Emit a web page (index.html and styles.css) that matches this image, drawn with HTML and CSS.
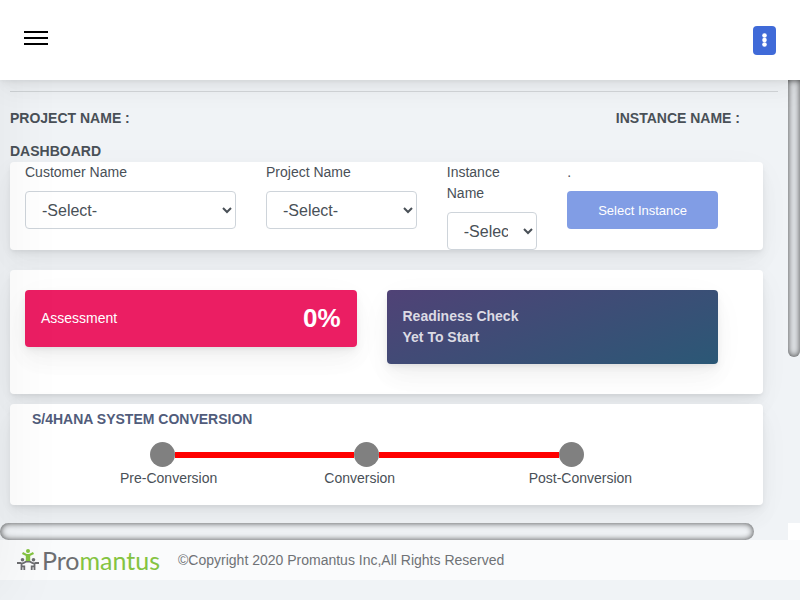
FILE: index.html
```html
<!DOCTYPE html>
<html lang="en">
<head>
<meta charset="utf-8">
<meta name="viewport" content="width=device-width, initial-scale=1">
<title>Promantus Dashboard</title>
<link rel="stylesheet" href="styles.css">
</head>
<body>
<header class="header">
  <button class="burger" type="button" aria-label="Open navigation"><span></span><span></span><span></span></button>
  <button class="more" type="button" aria-label="More options">
    <svg width="5" height="14" viewBox="0 0 5 14" fill="#fff"><circle cx="2.5" cy="2.5" r="2.3"/><circle cx="2.5" cy="7" r="2.3"/><circle cx="2.5" cy="11.5" r="2.3"/></svg>
  </button>
</header>
<div class="viewport">
  <main class="content">
    <hr class="rule">
    <div class="names">
      <h2 class="heading">PROJECT NAME :</h2>
      <h2 class="heading">INSTANCE NAME :</h2>
    </div>
    <h1 class="heading">DASHBOARD</h1>
    <form class="card filters">
      <div class="field">
        <label for="customer">Customer Name</label>
        <select id="customer"><option>-Select-</option></select>
      </div>
      <div class="field">
        <label for="project">Project Name</label>
        <select id="project"><option>-Select-</option></select>
      </div>
      <div class="field">
        <label for="instance">Instance Name</label>
        <select id="instance"><option>-Select-</option></select>
      </div>
      <div class="field">
        <span class="dot">.</span>
        <button class="submit" type="button" disabled>Select Instance</button>
      </div>
    </form>
    <section class="card tiles">
      <div class="tile assessment"><span>Assessment</span><strong class="percent">0%</strong></div>
      <div class="tile readiness">Readiness Check<br>Yet To Start</div>
    </section>
    <section class="card conversion">
      <h2 class="heading conversion-title">S/4HANA SYSTEM CONVERSION</h2>
      <ol class="steps">
        <li class="step">Pre-Conversion</li>
        <li class="step">Conversion</li>
        <li class="step">Post-Conversion</li>
      </ol>
    </section>
  </main>
  <div class="track-y"><div class="thumb thumb-y"></div></div>
  <div class="track-x"><div class="thumb thumb-x"></div></div>
  <div class="corner"></div>
</div>
<footer class="footer">
  <div class="logo">
    <svg width="22" height="22" viewBox="0 0 22 22" fill="none">
      <g stroke="#6d6e71" stroke-width="1.8"><circle cx="5.5" cy="10.8" r="1.8" fill="#6d6e71" stroke="none"/><circle cx="16.5" cy="10.8" r="1.8" fill="#6d6e71" stroke="none"/><path d="M0 14H3.500Q5.500 15 7.500 13.500L9 12.700H13L14.500 13.500Q16.500 15 18.500 14H22M4.500 14V21M17.500 14V21M4 17.300H7.300V21M18 17.300H14.700V21"/></g>
      <g stroke="#84c341" stroke-width="2.2"><circle cx="11" cy="2" r="2" fill="#84c341" stroke="none"/><path d="M5.500 4L9.300 6H12.700L16.500 4M9.900 5.500V12M12.100 5.500V12"/></g>
    </svg>
    <span class="brand">Pro<span>mantus</span></span>
  </div>
  <p class="copyright">©Copyright 2020 Promantus Inc,All Rights Reserved</p>
</footer>
</body>
</html>
```
FILE: styles.css
```css
*, *::before, *::after { box-sizing: border-box; }
:root {
  --shadow: 0 8px 35px rgba(4, 9, 20, .03), 0 15px 22px rgba(4, 9, 20, .03), 0 4px 9px rgba(4, 9, 20, .05), 0 2px 3px rgba(4, 9, 20, .03);
}
body {
  margin: 0;
  background: #f0f3f6;
  color: #495057;
  font: 14px/21px "Liberation Sans", Arial, sans-serif;
  overflow: hidden;
  min-height: 100vh;
}
/* soft edge of the collapsed side drawer */
body::before {
  content: "";
  position: fixed;
  z-index: 2;
  top: 0;
  bottom: 0;
  left: -280px;
  width: 280px;
  box-shadow: 7px 0 60px rgba(0, 0, 0, .05);
  pointer-events: none;
}
button, select { font-family: inherit; }
.header {
  position: relative;
  z-index: 3;
  display: flex;
  align-items: center;
  justify-content: space-between;
  height: 80px;
  padding: 0 24px;
  background: #fff;
  box-shadow: var(--shadow);
}
.burger {
  display: grid;
  gap: 4px;
  width: 24px;
  margin: 0 0 4px;
  padding: 0;
  border: 0;
  background: none;
}
.burger span { height: 2px; background: #000; }
.more {
  display: flex;
  align-items: center;
  justify-content: center;
  width: 23px;
  height: 29px;
  padding: 0;
  border: 0;
  border-radius: 4px;
  background: #3f6ad8;
}
.viewport {
  display: grid;
  grid-template-columns: 1fr 12px;
  grid-template-rows: auto 17px;
}
.content { padding: 11px 10px 18px; }
.rule { margin: 0 0 16px; border: 0; border-top: 1px solid #d2d6d9; }
.heading { margin: 0; font-size: 14px; line-height: 21px; font-weight: 700; }
.names {
  display: flex;
  justify-content: space-between;
  margin-bottom: 12px;
  padding-right: 38px;
}
.card {
  margin-right: 15px;
  padding-right: 30px;
  border-radius: 4px;
  background: #fff;
  box-shadow: var(--shadow);
}
.filters { display: grid; grid-template-columns: 4fr 3fr 2fr 3fr; margin-bottom: 20px; }
.field { min-width: 0; padding: 0 15px; }
.field label, .dot { display: block; margin-bottom: 8px; }
.field select {
  display: block;
  width: 100%;
  height: 38px;
  padding: 6px 12px;
  border: 1px solid #ced4da;
  border-radius: 4px;
  background: #fff;
  color: #495057;
  font-size: 16px;
}
.submit {
  display: block;
  width: 100%;
  height: 38px;
  border: 0;
  border-radius: 4px;
  background: #3f6ad8;
  color: #fff;
  font-size: 13px;
  opacity: .65;
}
.tiles {
  display: grid;
  grid-template-columns: 1fr 1fr;
  align-items: start;
  gap: 30px;
  margin-bottom: 10px;
  padding: 20px 45px 30px 15px;
}
.tile { border-radius: 4px; box-shadow: var(--shadow); }
.assessment {
  display: flex;
  align-items: center;
  justify-content: space-between;
  height: 57px;
  padding: 0 16px;
  background: #eb1e63;
  color: #fff;
}
.percent { font-size: 26px; line-height: 27px; }
.readiness {
  padding: 16px;
  background: linear-gradient(160deg, #504276, #2b5876);
  color: #dcdbe4;
  font-weight: 700;
}
.conversion { padding: 5px 30px 16px 22px; }
.conversion-title { color: #515c7b; }
.steps {
  display: grid;
  grid-template-columns: repeat(3, 1fr);
  margin: 12px 0 0 88px;
  padding: 0;
  list-style: none;
}
.step::before {
  content: "";
  display: block;
  width: 25px;
  height: 25px;
  margin: 0 0 1px 30px;
  border-radius: 50%;
  background: gray;
}
.step { position: relative; }
.step:not(:last-child)::after {
  content: "";
  position: absolute;
  top: 10px;
  left: 55px;
  width: calc(100% - 25px);
  height: 6px;
  background: red;
}
.thumb { border-radius: 10px; box-shadow: inset 0 0 6px rgba(0, 0, 0, .7); }
.track-y { overflow: hidden; }
.thumb-y {
  height: 62.5%;
  background: #e0e3e6;
  border-radius: 0 0 10px 10px;
}
.thumb-x { width: 754px; max-width: 96%; height: 17px; }
.corner { background: #fff; }
.footer {
  display: flex;
  align-items: center;
  gap: 18px;
  height: 40px;
  padding-left: 17px;
  background: #fafbfc;
}
.logo { display: flex; align-items: center; gap: 3px; }
.brand {
  color: #6d6e71;
  font: 400 25px/40px Lato, "Open Sans", sans-serif;
}
.brand span { color: #84c341; }
.copyright { margin: 0; color: #6f7276; }
```
